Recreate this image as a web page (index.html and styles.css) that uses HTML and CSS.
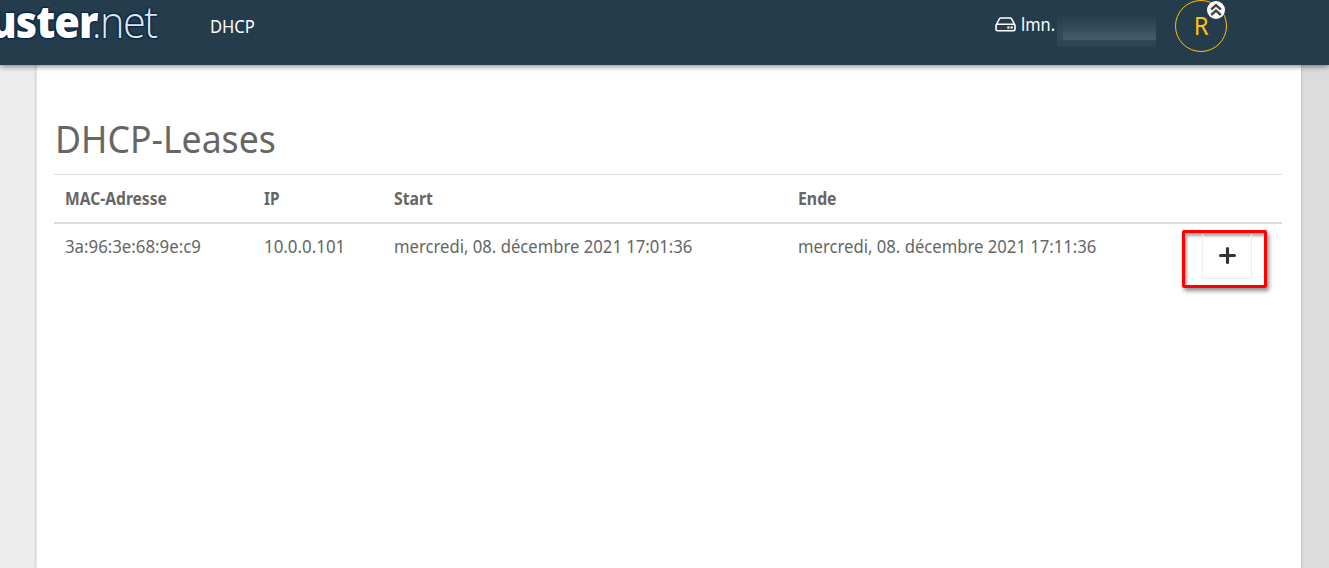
FILE: index.html
```html
<!DOCTYPE html>
<html lang="de">
<head>
<meta charset="utf-8">
<title>DHCP-Leases</title>
<link rel="stylesheet" href="styles.css">
</head>
<body>
<header class="topbar">
  <div class="brand"><span class="fit brand-text"><b>uster</b><span class="brand-net">.net</span></span></div>
  <nav class="nav"><span class="fit nav-text">DHCP</span></nav>
  <div class="host">
    <svg class="drive" viewBox="0 0 21 15"><path d="M1.2 8 L4.3 2 Q4.8 1 6 1 H15 Q16.200 1 16.700 2 L19.800 8" /><rect x="1" y="7.300" width="19" height="6.400" rx="1.700"/><circle cx="13.400" cy="10.500" r=".5"/><circle cx="16.700" cy="10.500" r=".5"/></svg>
    <span class="fit host-text">lmn.</span>
    <span class="redacted"><i></i></span>
  </div>
  <div class="avatar"><span class="fit avatar-text">R</span>
    <svg class="badge" viewBox="0 0 18 18"><circle cx="9" cy="9" r="9"/><path d="M4.200 8.500 9 4.100l4.800 4.400M4.200 14 9 9.600l4.800 4.400"/></svg>
  </div>
</header>
<main class="page">
  <section class="panel">
    <h1><span class="fit title-text">DHCP-Leases</span></h1>
    <div class="leases">
      <div class="row head">
        <span><b class="fit h-mac">MAC-Adresse</b></span><span><b class="fit h-ip">IP</b></span><span><b class="fit h-date">Start</b></span><span><b class="fit h-date">Ende</b></span><span></span>
      </div>
      <div class="row entry">
        <span><span class="fit mac">3a:96:3e:68:9e:c9</span></span><span><span class="fit ip">10.0.0.101</span></span><span><span class="fit date">mercredi, 08. décembre 2021 17:01:36</span></span><span><span class="fit date">mercredi, 08. décembre 2021 17:11:36</span></span>
        <span class="action"><button class="add" aria-label="Hinzufügen"><svg viewBox="0 0 16 16"><path d="M8 1.500v13M1.500 8h13"/></svg></button></span>
      </div>
    </div>
  </section>
</main>
</body>
</html>
```
FILE: styles.css
```css
* { box-sizing: border-box; }
body { margin: 0; height: 568px; overflow: hidden; display: flex; flex-direction: column; background: #fff; color: #666; font-family: "Noto Sans", sans-serif; font-size: 17px; line-height: 24px; }
.fit { display: inline-block; white-space: nowrap; transform-origin: 0 50%; }
.topbar { position: relative; z-index: 1; flex: 0 0 65px; display: flex; background: #243c4b; color: #fff; box-shadow: 0 1px 6px rgba(0,0,0,.55); }
.brand { width: 210px; font-family: "Open Sans", sans-serif; font-size: 44px; line-height: 42px; letter-spacing: -1px; }
.brand b { font-weight: 800; }
.brand-text { margin-left: -11px; transform: scaleX(.94); text-shadow: 1px 1px 1px #06264b, -1px -1px 1px #06264b, 1px -1px 1px #06264b, -1px 1px 1px #06264b; }
.brand-net { margin-left: -6px; font-weight: 300; color: #dce7ef; letter-spacing: -1.6px; }
.nav { width: 785px; padding-top: 14px; font-size: 18px; }
.nav-text { transform: scaleX(.92); }
.host { width: 180px; display: flex; padding-top: 13px; }
.drive { flex: none; width: 21px; height: 15px; margin: 4px 5px 0 0; fill: none; stroke: #fff; stroke-width: 1.6; }
.host-text { flex: none; width: 36px; font-size: 18px; line-height: 23px; transform: scaleX(.91); }
.redacted { flex: none; width: 99px; height: 32px; margin: 2px 0 0 0; background: linear-gradient(#263e4d, #344b59 60%, #2b4352); }
.redacted i { display: block; margin-left: 6px; height: 25px; background: linear-gradient(#263e4d, #324a58 45%, #475c69); }
.avatar { position: relative; width: 52px; height: 52px; border: 1px solid #ffc107; border-radius: 50%; color: #ffc107; font-size: 26px; line-height: 49px; text-align: center; }
.avatar-text { transform-origin: 50% 50%; transform: scaleX(.92); }
.badge { position: absolute; left: 31px; top: 0; width: 18px; height: 18px; fill: #fff; }
.badge path { fill: none; stroke: #444; stroke-width: 2.4; }
.page { flex: 1; display: flex; background: linear-gradient(90deg, #ededed 50%, #dcdcdc 50%); }
.panel { width: 1265px; margin-left: 36px; padding: 45px 19px 0 18px; background: #fff; border-left: 1px solid #e6e6e6; box-shadow: 0 0 3px rgba(0,0,0,.2); }
h1 { margin: 0; height: 64px; font-size: 39px; font-weight: 400; line-height: 56px; }
.title-text { transform: scaleX(.913); }
.leases { border-top: 1px solid #ddd; margin-left: -1px; }
.row { display: grid; grid-template-columns: 199px 130px 404px 384px 1fr; padding: 12px 0 0 11px; }
.head { height: 49px; border-bottom: 2px solid #ddd; }
.h-mac { transform: scaleX(.918); }
.h-ip { transform: scaleX(.9); }
.h-date { transform: scaleX(.93); }
.entry { padding-top: 10px; font-size: 17.5px; }
.mac { transform: scaleX(.96); }
.ip { transform: scaleX(.965); }
.date { transform: scaleX(.952); }
.action { width: 85px; height: 58px; margin: -4px 0 0 0; padding: 3px 0 0 17px; border: 3px solid #f00; border-radius: 2px; box-shadow: 2px 3px 4px rgba(0,0,0,.45), inset 2px 3px 3px rgba(0,0,0,.35); }
.add { display: flex; align-items: flex-start; width: 50px; height: 45px; margin-top: -2px; padding: 13px 0 0 16px; background: none; border: 1px solid #eee; border-top: 0; }
.add svg { display: block; width: 17px; height: 17px; fill: none; stroke: #333; stroke-width: 3; stroke-linecap: round; }
```
